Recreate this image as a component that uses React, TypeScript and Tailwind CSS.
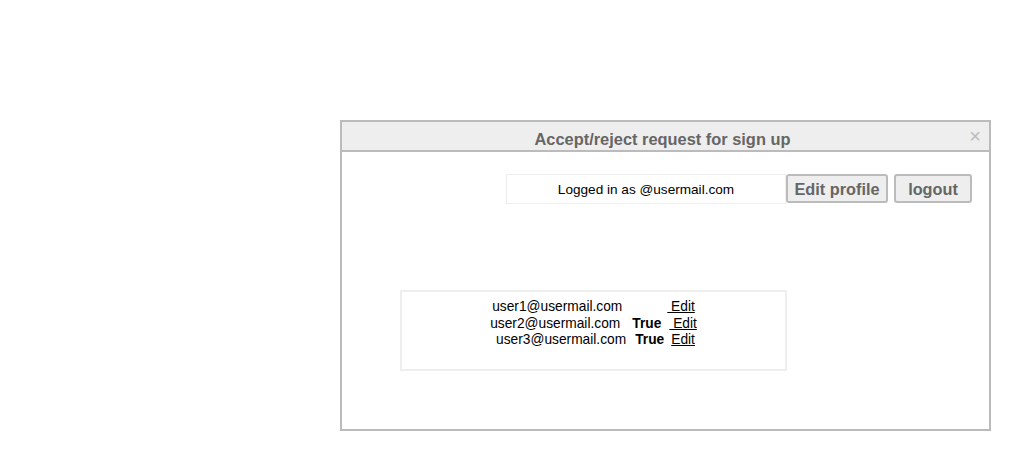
export default function App() {
  const font = { fontFamily: '"Liberation Sans", Arial, sans-serif' }
  return (
    <div className="w-[1010px] h-[450px] bg-white relative" style={font}>
      <div className="pt-[120px] pl-[340px]">
        <div className="w-[651px] h-[311px] border-2 border-[#bbbbbb] bg-white flex flex-col">
          {/* header */}
          <div className="relative h-[30px] bg-[#eeeeee] border-b-2 border-[#bbbbbb] flex items-center justify-center">
            <span className="text-[16.4px] font-bold text-[#666666] mt-[7px] -ml-[6px]">Accept/reject request for sign up</span>
            <span className="absolute right-[8px] top-[4px] text-[20px] leading-[20px] text-[#bbbbbb]">×</span>
          </div>

          {/* user bar */}
          <div className="flex justify-end pr-[17px] pt-[22px]">
            <div className="w-[280px] h-[30px] border border-[#eeeeee] flex items-center justify-center pt-[2px] text-[13.6px] text-black">
              Logged in as @usermail.com
            </div>
            <button className="w-[102px] h-[29px] pt-[1px] bg-[#eeeeee] border-2 border-[#bbbbbb] rounded-[3px] text-[16.3px] font-bold text-[#666666]">
              Edit profile
            </button>
            <button className="ml-[6px] w-[78px] h-[29px] pt-[1px] bg-[#eeeeee] border-2 border-[#bbbbbb] rounded-[3px] text-[16.3px] font-bold text-[#666666]">
              logout
            </button>
          </div>

          {/* requests */}
          <div className="pl-[58px] pt-[86px]">
            <div className="w-[387px] h-[81px] border-2 border-[#eeeeee] pt-[7px] text-[13.75px] text-black leading-[16.5px]">
              <div className="flex justify-center">
                <span>user1@usermail.com</span>
                <span className="ml-[45px] underline">&nbsp;Edit</span>
              </div>
              <div className="flex justify-center">
                <span>user2@usermail.com</span>
                <span className="ml-[12px] font-bold">True</span>
                <span className="ml-[8px] underline">&nbsp;Edit</span>
              </div>
              <div className="flex justify-center pl-[4px]">
                <span>user3@usermail.com</span>
                <span className="ml-[9px] font-bold">True</span>
                <span className="ml-[7px] underline">Edit</span>
              </div>
            </div>
          </div>
        </div>
      </div>
    </div>
  )
}
